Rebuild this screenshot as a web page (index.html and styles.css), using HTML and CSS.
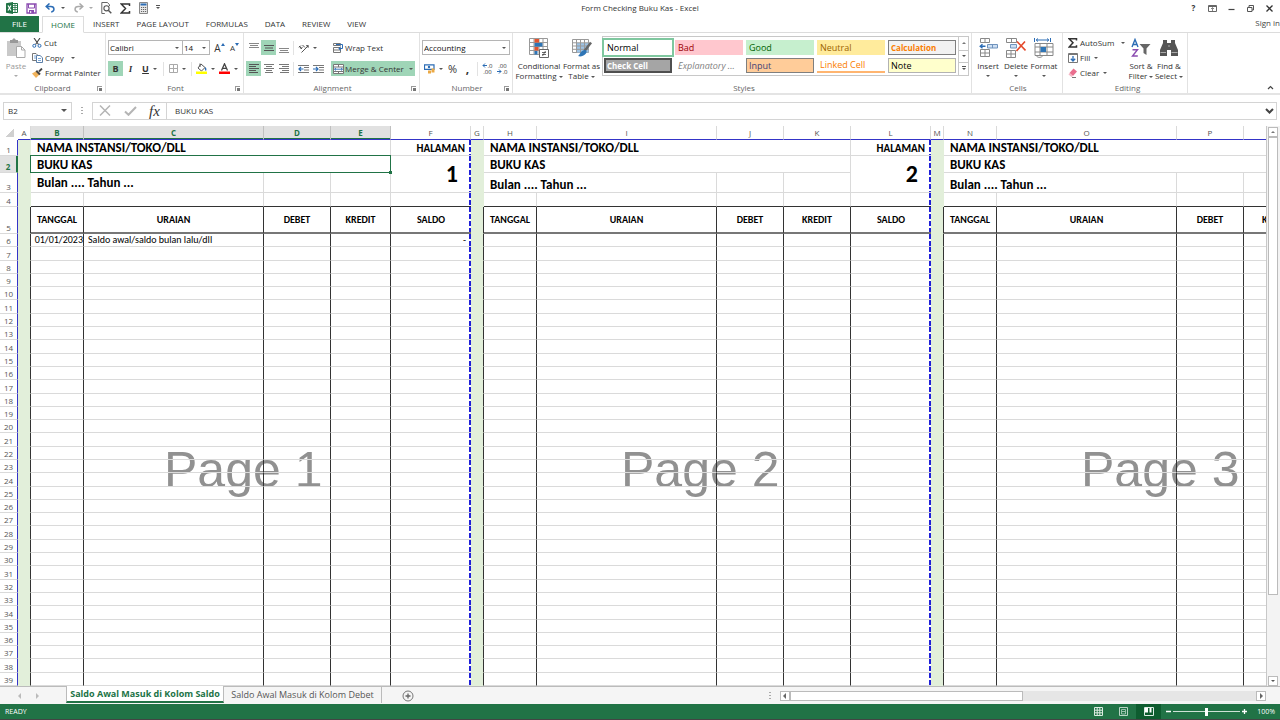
FILE: index.html
```html
<!DOCTYPE html>
<html lang="en">
<head>
<meta charset="utf-8">
<title>Form Checking Buku Kas - Excel</title>
<link rel="stylesheet" href="styles.css">
</head>
<body>
<header class="titlebar">
  <div class="quick">
    <svg class="app-logo" width="12" height="12" viewBox="0 0 12 12"><path d="M6 1.500h5.500v9H6z" fill="#fff" stroke="#217346"/><path d="M7 3.500h4M7 5.500h4M7 7.500h4M9 2v8" stroke="#217346" stroke-width=".8"/><path d="M0 1.200 7 0v12L0 10.800z" fill="#217346"/><path d="m2 3.500 3 5m0-5-3 5" stroke="#fff" stroke-width="1.200"/></svg>
    <button class="icon-btn" aria-label="Save"><svg width="11" height="11" viewBox="0 0 11 11"><path d="M1 1h9v9H1z" fill="#fff" stroke="#8a4bb0" stroke-width="1.300"/><path d="M2.500 1v4h6V1" fill="none" stroke="#8a4bb0"/><path d="M3 7h5v3.500H3z" fill="#8a4bb0"/><path d="M4.200 8h1v2h-1z" fill="#fff"/></svg></button>
    <button class="icon-btn" aria-label="Undo"><svg width="11" height="10" viewBox="0 0 11 10"><path d="M4.500.5 1.200 3.500l3.300 3M1.500 3.500h4.300c4 0 4.200 5 .4 5.500" fill="none" stroke="#2b6cb5" stroke-width="1.500"/></svg><i class="caret"></i></button>
    <button class="icon-btn faded" aria-label="Redo"><svg width="11" height="10" viewBox="0 0 11 10"><path d="M6.500.5l3.300 3-3.300 3M9.500 3.500H5.200c-4 0-4.200 5-.4 5.500" fill="none" stroke="#aaa" stroke-width="1.500"/></svg><i class="caret"></i></button>
    <button class="icon-btn" aria-label="Print Preview"><svg width="11" height="12" viewBox="0 0 11 12"><path d="M8.500 4V2.800L6.500.5H.8v11h3" fill="none" stroke="#666"/><circle cx="5.500" cy="6.300" r="2.600" fill="#fff" stroke="#555" stroke-width="1.100"/><path d="m7.300 8.200 3 3" stroke="#555" stroke-width="1.500"/></svg></button>
    <button class="icon-btn" aria-label="AutoSum"><svg width="11" height="11" viewBox="0 0 11 11"><path d="M9.500 3V1H1.200l4.300 4.500L1.200 10h8.300V8" fill="none" stroke="#333" stroke-width="1.500"/></svg></button>
    <button class="icon-btn" aria-label="Calculator"><svg width="9" height="12" viewBox="0 0 9 12"><path d="M.5.5h8v11h-8z" fill="#e8e8e8" stroke="#888"/><path d="M1.500 1.500h6v2h-6z" fill="#2b6cb5"/><path d="M2 5.500h5.500M2 7.500h5.500M2 9.500h5.500" stroke="#666" stroke-dasharray="1.200 .8"/></svg></button>
    <button class="icon-btn customize" aria-label="Customize"><i class="caret over"></i></button>
  </div>
  <h1>Form Checking Buku Kas - Excel</h1>
  <div class="window-btns">
    <button aria-label="Help"><b>?</b></button>
    <button aria-label="Ribbon options"><svg width="9" height="7" viewBox="0 0 9 7"><path d="M.5.5h8v6h-8zM.5 1.500h8" fill="none" stroke="#666"/><path d="m3 4 1.500-1.500L6 4M4.500 3v3" fill="none" stroke="#666" stroke-width=".8"/></svg></button>
    <button aria-label="Minimize"><svg width="7" height="7" viewBox="0 0 7 7"><path d="M.5 4.500h6" stroke="#444" stroke-width="1.200"/></svg></button>
    <button aria-label="Restore"><svg width="7" height="7" viewBox="0 0 7 7"><path d="M.5 2.500h4.500v4H.5zM2 2.500v-2h4.500V5H5" fill="none" stroke="#555"/></svg></button>
    <button aria-label="Close"><svg width="7" height="7" viewBox="0 0 7 7"><path d="m.5.5 6 6m0-6-6 6" stroke="#333" stroke-width="1.300"/></svg></button>
  </div>
</header>
<nav class="tabs">
  <button class="file">FILE</button>
  <button class="active">HOME</button>
  <button>INSERT</button>
  <button>PAGE LAYOUT</button>
  <button>FORMULAS</button>
  <button>DATA</button>
  <button>REVIEW</button>
  <button>VIEW</button>
  <a class="signin" href="#">Sign in</a>
</nav>

<section class="ribbon">
  <div class="group clipboard">
    <div class="body">
      <button class="big faded"><svg width="20" height="20" viewBox="0 0 20 20"><path d="M1 3h14v15H1z" fill="#c9c9c9"/><path d="M4 2h2l2-2 2 2h2v3H4z" fill="#999"/><path d="M10.500 8.500h5l3.500 3.500v7.500h-8.500z" fill="#fff" stroke="#aaa"/><path d="M15.500 8.500V12H19" fill="none" stroke="#aaa"/></svg><span>Paste</span><i class="caret"></i></button>
      <div class="stack">
        <button><svg width="10" height="10" viewBox="0 0 10 10"><path d="M2 0l4.500 6.500M8 0 3.500 6.500" stroke="#444" stroke-width="1.100"/><circle cx="2.300" cy="7.800" r="1.500" fill="none" stroke="#2b6cb5"/><circle cx="7.500" cy="7.800" r="1.500" fill="none" stroke="#2b6cb5"/></svg>Cut</button>
        <button><svg width="11" height="10" viewBox="0 0 11 10"><path d="M.5.5H4l2 2v5H.5z" fill="#fff" stroke="#777"/><path d="M4.500 2.500H8l2.500 2.200v4.800h-6z" fill="#fff" stroke="#5c7fa8"/><path d="M6 5.500h3M6 7.500h3M2 3h2M2 5h2" stroke="#5b93cf" stroke-width=".8"/></svg>Copy<i class="caret wide"></i></button>
        <button><svg width="11" height="10" viewBox="0 0 11 10"><path d="M0 5.500 4.500 3l3 3.500L4 10z" fill="#f0b35c"/><path d="M4.300 2.700 8 6.500" stroke="#444" stroke-width="2"/><path d="m7 3.500 3-3" stroke="#444" stroke-width="1.800"/></svg>Format Painter</button>
      </div>
    </div>
    <footer>Clipboard<i class="launch"></i></footer>
  </div>

  <div class="group font">
    <div class="body rows">
      <div class="row">
        <span class="combo family"><select aria-label="Font"><option>Calibri</option></select></span><span class="combo size"><select aria-label="Font size"><option>14</option></select></span>
        <button class="sq letter" aria-label="Increase font size">A<svg width="4" height="3" viewBox="0 0 4 3"><path d="M2 0l2 3H0z" fill="#2b6cb5"/></svg></button>
        <button class="sq letter small" aria-label="Decrease font size">A<svg width="4" height="3" viewBox="0 0 4 3"><path d="M0 0h4L2 3z" fill="#2b6cb5"/></svg></button>
      </div>
      <div class="row">
        <button class="sq on"><b>B</b></button>
        <button class="sq"><em>I</em></button>
        <button class="sq with-caret"><b><u>U</u></b><i class="caret"></i></button>
        <span class="sep"></span>
        <button class="sq with-caret" aria-label="Borders"><svg width="9" height="9" viewBox="0 0 9 9"><path d="M.5.5h8v8h-8zM4.500 0v9M0 4.500h9" fill="none" stroke="#aaa"/></svg><i class="caret"></i></button>
        <span class="sep"></span>
        <button class="sq with-caret" aria-label="Fill color"><svg width="11" height="11" viewBox="0 0 11 11"><path d="m5 1 4 3.500L5.500 8 2 5z" fill="#fff" stroke="#555"/><path d="M4 4V.5" stroke="#555"/><path d="M9 4c2 1 1.500 3 1 4-1-.5-1.500-2-1-4z" fill="#2b6cb5"/><path d="M0 8.500h11V11H0z" fill="#ff0"/></svg><i class="caret"></i></button>
        <button class="sq with-caret" aria-label="Font color"><svg width="11" height="11" viewBox="0 0 11 11"><path d="M2.500 7.500 5.500.8l3 6.700M3.600 5.300h3.800" fill="none" stroke="#444" stroke-width="1.300"/><path d="M0 8.500h11V11H0z" fill="red"/></svg><i class="caret"></i></button>
      </div>
    </div>
    <footer>Font<i class="launch"></i></footer>
  </div>

  <div class="group align">
    <div class="body rows">
      <div class="row">
        <button class="sq" aria-label="Top align"><svg width="10" height="10" viewBox="0 0 10 10"><path d="M0 .5h10M1 2.500h8M0 4.500h10" stroke="#888"/></svg></button>
        <button class="sq on" aria-label="Middle align"><svg width="10" height="10" viewBox="0 0 10 10"><path d="M0 2.500h10M1 5h8M0 7.500h10" stroke="#555"/></svg></button>
        <button class="sq" aria-label="Bottom align"><svg width="10" height="10" viewBox="0 0 10 10"><path d="M0 5.500h10M1 7.500h8M0 9.500h10" stroke="#888"/></svg></button>
        <span class="sep"></span>
        <button class="sq with-caret" aria-label="Orientation"><svg width="11" height="10" viewBox="0 0 11 10"><path d="M3.500 9.500 10 3M8 2.800l2.300-.3-.2 2.300M1 4.500l2-2M2.500 6l2.200-2.200M4.500 2l2.500 2.500M1 3l3 3" fill="none" stroke="#555"/></svg><i class="caret"></i></button>
      </div>
      <div class="row">
        <button class="sq on" aria-label="Align left"><svg width="10" height="9" viewBox="0 0 10 9"><path d="M0 .5h10M0 2.500h7M0 4.500h10M0 6.500h7M0 8.500h9" stroke="#555"/></svg></button>
        <button class="sq" aria-label="Center"><svg width="10" height="9" viewBox="0 0 10 9"><path d="M0 .5h10M2 2.500h6M0 4.500h10M2 6.500h6M1 8.500h8" stroke="#777"/></svg></button>
        <button class="sq" aria-label="Align right"><svg width="10" height="9" viewBox="0 0 10 9"><path d="M0 .5h10M3 2.500h7M0 4.500h10M3 6.500h7M1 8.500h9" stroke="#777"/></svg></button>
        <span class="sep"></span>
        <button class="sq" aria-label="Decrease indent"><svg width="11" height="8" viewBox="0 0 11 8"><path d="M0 .5h11M6 2.500h5M6 5h5M0 7.500h11" stroke="#777"/><path d="M5.500 4H1m2-2L1 4l2 2" fill="none" stroke="#2b6cb5" stroke-width="1.200"/></svg></button>
        <button class="sq" aria-label="Increase indent"><svg width="11" height="8" viewBox="0 0 11 8"><path d="M0 .5h11M6 2.500h5M6 5h5M0 7.500h11" stroke="#777"/><path d="M0 4h5M3 2l2 2-2 2" fill="none" stroke="#2b6cb5" stroke-width="1.200"/></svg></button>
      </div>
    </div>
    <div class="body rows wraps">
      <button class="wide-btn"><svg width="11" height="10" viewBox="0 0 11 10"><path d="M.5.500h7v2h-7zM.500 4.500h7v5h-7zM0 7h7" fill="none" stroke="#777"/><path d="M3 1.500h6.500v4H6m1.500-2L6 5.500l1.500 2" fill="none" stroke="#2b6cb5"/></svg>Wrap Text</button>
      <button class="wide-btn on"><svg width="11" height="10" viewBox="0 0 11 10"><path d="M.5.500h10v9H.5z" fill="#fff" stroke="#777"/><path d="M0 3h11M0 7.500h11M5.500 0v3M5.500 7.500V10" stroke="#777"/><path d="M1.500 5.200h8M3 4 1.500 5.200 3 6.500M8 4l1.500 1.200L8 6.500" fill="none" stroke="#2b6cb5" stroke-width=".9"/></svg>Merge &amp; Center<i class="caret end"></i></button>
    </div>
    <footer>Alignment<i class="launch"></i></footer>
  </div>

  <div class="group number">
    <div class="body rows">
      <span class="combo format"><select aria-label="Number format"><option>Accounting</option></select></span>
      <div class="row">
        <button class="sq with-caret" aria-label="Accounting format"><svg width="11" height="10" viewBox="0 0 11 10"><path d="M.5.8h9.500v4.500H.5z" fill="#fff" stroke="#2b6cb5" stroke-width="1.200"/><circle cx="5" cy="3" r="1.200" fill="#2b6cb5"/><path d="M4 6.500h3v3H4zM7.500 4.500h3v4h-3z" fill="#eba944"/></svg><i class="caret"></i></button>
        <button class="sq pct">%</button>
        <button class="sq comma">,</button>
        <span class="sep"></span>
        <button class="sq dec" aria-label="Increase decimal"><span><svg width="5" height="5" viewBox="0 0 5 5"><path d="M5 2.500H1m2-2-2 2 2 2" fill="none" stroke="#2b6cb5"/></svg>.0</span><span>.00</span></button>
        <button class="sq dec" aria-label="Decrease decimal"><span>.00</span><span><svg width="5" height="5" viewBox="0 0 5 5"><path d="M0 2.500h4m-2-2 2 2-2 2" fill="none" stroke="#2b6cb5"/></svg>.0</span></button>
      </div>
    </div>
    <footer>Number<i class="launch"></i></footer>
  </div>

  <div class="group styles">
    <div class="body">
      <button class="big"><svg width="20" height="20" viewBox="0 0 20 20"><path d="M.5.500h18v16H.5zM5 0v17M10 0v17M14 0v17M0 4.500h18M0 8.500h18M0 12.500h18" fill="#fff" stroke="#999"/><path d="M5.500 1h4.500v3.500H5.500zM5.500 9h4v3.500h-4z" fill="#e2532f"/><path d="M5.500 5h8v3.500h-8zM5.500 13h3v3.500h-3z" fill="#2e75b6"/><path d="M10.500 11.500h9v8h-9z" fill="#fff" stroke="#666"/><path d="M13 14.500h4M13 16.500h4M16.500 13l-3 5" stroke="#444" stroke-width=".8"/></svg><span>Conditional</span><span>Formatting<i class="caret tight"></i></span></button>
      <button class="big"><svg width="20" height="20" viewBox="0 0 20 20"><path d="M.5 1.500h16v13H.5z" fill="#fff" stroke="#999"/><path d="M4.500 5h12v9.500h-12z" fill="#9dc3e6"/><path d="M4.500 1v14M8.500 1v14M12.500 1v14M0 4.800h17M0 8h17M0 11.300h17" stroke="#999"/><path d="M19 4.500 12.500 13" stroke="#666" stroke-width="2.500"/><path d="M12.500 12c2 0 3 2 1 4s-5 3-7.500 2c2-1 2-5 6.500-6z" fill="#2e75b6"/></svg><span>Format as</span><span>Table<i class="caret tight"></i></span></button>
      <div class="gallery">
        <div class="swatches">
          <button class="s-normal">Normal</button><button class="s-bad">Bad</button><button class="s-good">Good</button><button class="s-neutral">Neutral</button><button class="s-calc">Calculation</button>
          <button class="s-check">Check Cell</button><button class="s-expl">Explanatory ...</button><button class="s-input">Input</button><button class="s-linked">Linked Cell</button><button class="s-note">Note</button>
        </div>
        <div class="gallery-nav">
          <button aria-label="Previous styles" disabled><i class="caret up"></i></button><button aria-label="Next styles"><i class="caret"></i></button><button aria-label="More styles"><i class="caret over"></i></button>
        </div>
      </div>
    </div>
    <footer>Styles</footer>
  </div>

  <div class="group cells">
    <div class="body">
      <button class="big"><svg width="20" height="20" viewBox="0 0 20 20"><path d="M2.500.500h9v4h-9zM7 .500v4M2.500 11.500h9v7h-9zM7 11.500v7M2.500 15h9" fill="#fff" stroke="#888"/><path d="M9.500 6.500h10v3.500h-10zM14.500 6.500V10" fill="#cfe0f3" stroke="#6f93bd"/><path d="M7.500 8.200H2m2.500-2L2.200 8.200l2.300 2" fill="none" stroke="#2b6cb5" stroke-width="1.400"/></svg><span>Insert</span><i class="caret"></i></button>
      <button class="big"><svg width="20" height="20" viewBox="0 0 20 20"><path d="M.5.500h10v4H.5zM5.500.500v4M.500 12.500h9v7h-9zM5 12.500v7M.500 16h9" fill="#fff" stroke="#888"/><path d="M4.500 6.500h6v3.500h-6z" fill="#cfe0f3" stroke="#6f93bd"/><path d="m11 3.500 8.500 9m-.5-9-8.500 9.500" stroke="#e4492b" stroke-width="1.600"/></svg><span>Delete</span><i class="caret"></i></button>
      <button class="big"><svg width="20" height="20" viewBox="0 0 20 20"><path d="M.5 0v4M16.500 0v4M2 2h13M4 .500 2.200 2 4 3.500M13 .500 14.800 2 13 3.500" fill="none" stroke="#2b6cb5"/><path d="M1 5.500h18v12H1zM6 5.500v12M13 5.500v12M1 9h18M1 14h18M2 17.500c2 3 6 2 7 0" fill="#fff" stroke="#888"/><path d="M6.500 9H12v5H6.500z" fill="#2e75b6"/></svg><span>Format</span><i class="caret"></i></button>
    </div>
    <footer>Cells</footer>
  </div>

  <div class="group editing">
    <div class="body">
      <div class="stack">
        <button><svg width="10" height="10" viewBox="0 0 10 10"><path d="M8.500 2.500V.8H1.200L5 4.800 1.200 9h7.300V7.300" fill="none" stroke="#333" stroke-width="1.500"/></svg>AutoSum<i class="caret wide"></i></button>
        <button><svg width="10" height="10" viewBox="0 0 10 10"><path d="M.5.500h9v9h-9z" fill="#fff" stroke="#777"/><path d="M.5 1.500h9" stroke="#777"/><path d="M5 3v5M2.800 5.800 5 8l2.200-2.200" fill="none" stroke="#2b6cb5" stroke-width="1.300"/></svg>Fill<i class="caret tight"></i></button>
        <button><svg width="10" height="10" viewBox="0 0 10 10"><path d="m5.500.5 3.500 3L5 8 1.500 5z" fill="#ea6e8e"/><path d="M1.500 5 5 8 3.500 9 .5 6.500z" fill="#f5b6c5"/><path d="M4 9.500h4" stroke="#777"/></svg>Clear<i class="caret tight"></i></button>
      </div>
      <button class="big"><svg width="20" height="20" viewBox="0 0 20 20"><path d="m1 9 3-7.500L7 9M2.200 6.500h3.600" fill="none" stroke="#2b6cb5" stroke-width="1.400"/><path d="M1.500 11.700h5L1.500 18h5.300" fill="none" stroke="#8a4bb0" stroke-width="1.400"/><path d="M8.500 6h11l-4 4.500V17l-3-2v-4.500z" fill="#666"/></svg><span>Sort &amp;</span><span>Filter<i class="caret tight"></i></span></button>
      <button class="big"><svg width="20" height="20" viewBox="0 0 20 20"><path d="M4 2h4v3h4V2h4v3l3 7v6h-7v-6H8v6H1v-6l3-7z" fill="#555"/><path d="M1.500 14.500H7M12.500 14.500h6M9 8h2" stroke="#aaa"/></svg><span>Find &amp;</span><span>Select<i class="caret tight"></i></span></button>
    </div>
    <footer>Editing</footer>
  </div>
  <button class="collapse" aria-label="Collapse the ribbon"><svg width="7" height="5" viewBox="0 0 7 5"><path d="m1 4 2.500-2.500L6 4" fill="none" stroke="#444" stroke-width="1.200"/></svg></button>
</section>

<section class="formula-bar">
  <div class="box name-box"><input aria-label="Name box" value="B2"><i class="caret big-caret"></i></div>
  <span class="grip"></span>
  <div class="box fx">
    <button aria-label="Cancel"><svg width="12" height="11" viewBox="0 0 12 11"><path d="m1 .5 10 10m0-10-10 10" stroke="#b5b5b5" stroke-width="1.500"/></svg></button>
    <button aria-label="Enter"><svg width="13" height="10" viewBox="0 0 13 10"><path d="m1 5.500 3.500 3.300L12 1" fill="none" stroke="#b5b5b5" stroke-width="2"/></svg></button>
    <button class="fx-btn" aria-label="Insert function">fx</button>
  </div>
  <div class="box formula"><input aria-label="Formula bar" value="BUKU KAS"><svg width="9" height="6" viewBox="0 0 9 6"><path d="m1 1 3.500 3.500L8 1" fill="none" stroke="#444" stroke-width="2"/></svg></div>
</section>

<main class="workspace">
  <div class="viewport">
    <div class="watermark p1">Page 1</div>
    <div class="watermark p2">Page 2</div>
    <div class="watermark p3">Page 3</div>
    <table class="grid">
      <thead>
        <tr><th class="corner"></th><th>A</th><th class="sel">B</th><th class="sel">C</th><th class="sel">D</th><th class="sel">E</th><th>F</th><th>G</th><th>H</th><th>I</th><th>J</th><th>K</th><th>L</th><th>M</th><th>N</th><th>O</th><th>P</th><th></th></tr>
      </thead>
      <tbody id="rows">
        <tr><th>1</th><td class="gut"></td><td class="span4 title">NAMA INSTANSI/TOKO/DLL</td><td class="brk head">HALAMAN</td><td class="gut"></td><td class="span4 title">NAMA INSTANSI/TOKO/DLL</td><td class="brk head">HALAMAN</td><td class="gut"></td><td class="span4 title">NAMA INSTANSI/TOKO/DLL</td></tr>
        <tr><th class="sel">2</th><td class="gut"></td><td class="span4 title active-cell">BUKU KAS</td><td class="brk page-no">1</td><td class="gut"></td><td class="span4 title">BUKU KAS</td><td class="brk page-no">2</td><td class="gut"></td><td class="span4 title">BUKU KAS</td></tr>
        <tr><th>3</th><td class="gut"></td><td class="span2 title">Bulan .... Tahun ...</td><td></td><td></td><td class="gut"></td><td class="span2 title low">Bulan .... Tahun ...</td><td></td><td></td><td class="gut"></td><td class="span2 title low">Bulan .... Tahun ...</td><td></td><td></td></tr>
        <tr class="above"><th>4</th><td class="gut"></td><td></td><td></td><td></td><td></td><td class="brk"></td><td class="gut"></td><td></td><td></td><td></td><td></td><td class="brk"></td><td class="gut"></td><td></td><td></td><td></td><td></td></tr>
        <tr class="ink heads"><th>5</th><td class="gut"></td><td>TANGGAL</td><td>URAIAN</td><td>DEBET</td><td>KREDIT</td><td class="brk">SALDO</td><td class="gut"></td><td>TANGGAL</td><td>URAIAN</td><td>DEBET</td><td>KREDIT</td><td class="brk">SALDO</td><td class="gut"></td><td>TANGGAL</td><td>URAIAN</td><td>DEBET</td><td>KREDIT</td></tr>
        <tr class="ink"><th>6</th><td class="gut"></td><td class="date">01/01/2023</td><td class="note">Saldo awal/saldo bulan lalu/dll</td><td></td><td></td><td class="brk amount">-</td><td class="gut"></td><td></td><td></td><td></td><td></td><td class="brk"></td><td class="gut"></td><td></td><td></td><td></td><td></td></tr>
      </tbody>
    </table>
  </div>
  <div class="vscroll">
    <button aria-label="Scroll up"><i class="caret up"></i></button>
    <div class="track"><div class="thumb"></div></div>
    <button aria-label="Scroll down"><i class="caret"></i></button>
  </div>
</main>

<section class="sheet-bar">
  <div class="sheet-nav"><button aria-label="Previous sheet"><i class="caret left"></i></button><button aria-label="Next sheet"><i class="caret right"></i></button></div>
  <button class="sheet current">Saldo Awal Masuk di Kolom Saldo</button>
  <button class="sheet">Saldo Awal Masuk di Kolom Debet</button>
  <button class="add" aria-label="New sheet"><svg width="12" height="12" viewBox="0 0 12 12"><circle cx="6" cy="6" r="5" fill="none" stroke="#777"/><path d="M3.500 6h5M6 3.500v5" stroke="#666" stroke-width="1.300"/></svg></button>
  <span class="grip"></span>
  <div class="hscroll">
    <button aria-label="Scroll left"><i class="caret left"></i></button>
    <div class="track"><div class="thumb"></div></div>
    <button aria-label="Scroll right"><i class="caret right"></i></button>
  </div>
</section>

<footer class="status">
  <span>READY</span>
  <div class="views">
    <button aria-label="Normal view"><svg width="9" height="9" viewBox="0 0 9 9"><path d="M.5.500h8v8h-8zM3.200 0v9M5.800 0v9M0 3.200h9M0 5.800h9" fill="none" stroke="#dcebe2"/></svg></button>
    <button aria-label="Page layout view"><svg width="9" height="9" viewBox="0 0 9 9"><path d="M.5.500h8v8h-8z" fill="none" stroke="#b9d4c4"/><path d="M2.500 2.500h4v4.500h-4zM3 4.500h3" fill="none" stroke="#b9d4c4" stroke-width=".8"/></svg></button>
    <button class="pressed" aria-label="Page break preview"><svg width="10" height="9" viewBox="0 0 10 9"><path d="M.5.500h9v8h-9z" fill="none" stroke="#dcebe2"/><path d="M1 1h3v4.500H1zM5.500 1h2v4.500h-2z" fill="#fff"/></svg></button>
  </div>
  <div class="zoom">
    <button aria-label="Zoom out"><svg width="5" height="7" viewBox="0 0 5 7"><path d="M0 3.500h5" stroke="#fff" stroke-width="1.500"/></svg></button>
    <input type="range" min="0" max="100" value="50" aria-label="Zoom">
    <button aria-label="Zoom in"><svg width="5" height="7" viewBox="0 0 5 7"><path d="M0 3.500h5M2.500 1v5" stroke="#fff" stroke-width="1.300"/></svg></button>
  </div>
  <span class="pct-label">100%</span>
</footer>
<script src="rows.js"></script>
</body>
</html>
```

FILE: rows.js
```js
// Blank ledger rows 7 to 39: gutter columns A, G, M and page-break columns F, L.
const kinds = ['gut', '', '', '', '', 'brk', 'gut', '', '', '', '', 'brk', 'gut', '', '', '', ''];
const body = document.getElementById('rows');
for (let n = 7; n <= 39; n++) {
  const tr = document.createElement('tr');
  tr.className = 'ink';
  const th = document.createElement('th');
  th.textContent = n;
  tr.append(th);
  for (const kind of kinds) {
    const td = document.createElement('td');
    if (kind) td.className = kind;
    tr.append(td);
  }
  body.append(tr);
}
```

FILE: styles.css
```css
* { box-sizing: border-box; }
html, body { height: 100%; }
body {
  margin: 0;
  display: flex;
  flex-direction: column;
  overflow: hidden;
  background: #fff;
  color: #333;
  font: 8px/10px "Segoe UI", "Open Sans", sans-serif;
}
button, input, select {
  font: inherit;
  color: inherit;
  margin: 0;
  padding: 0;
  border: 0;
  background: none;
}
button { display: flex; align-items: center; justify-content: center; white-space: nowrap; }
svg { display: block; flex: none; }

.caret { width: 0; height: 0; flex: none; border: 2px solid transparent; border-top-color: #555; border-bottom-width: 0; }
.caret.up { border-width: 0 2px 2px; border-color: transparent transparent #777; }
.caret.left { border-width: 3px 3px 3px 0; border-color: transparent #666; }
.caret.right { border-width: 3px 0 3px 3px; border-color: transparent #666; }
.caret.tight { display: inline-block; margin-left: 2px; vertical-align: middle; }
.caret.wide { margin-left: 5px; }
.caret.end { margin-left: auto; }
.caret.over::before { content: ""; display: block; width: 4px; height: 1px; margin: -4px 0 0 -2px; background: #555; }
.faded { color: #999; }
.faded .caret { border-top-color: #aaa; }

/* Title bar */
.titlebar { display: grid; grid-template-columns: 1fr auto 1fr; height: 16px; align-items: center; }
.titlebar h1 { margin: 0; font-size: 8px; font-weight: 400; color: #333; }
.quick { display: flex; align-items: center; gap: 8px; padding-left: 6px; }
.icon-btn { gap: 5px; }
.window-btns { display: flex; justify-content: flex-end; padding-right: 1px; }
.window-btns button { width: 19px; height: 14px; }

/* Ribbon tabs */
.tabs { display: flex; gap: 1px; height: 17px; border-bottom: 1px solid #dcdcdc; flex: none; }
.tabs button { padding: 0 8px; }
.tabs .file { width: 39px; margin-right: 2px; background: #217346; color: #fff; }
.tabs .active { width: 42px; margin-bottom: -1px; border: 1px solid #dcdcdc; border-bottom-color: #fff; background: #fff; color: #217346; }
.signin { margin-left: auto; color: #444; text-decoration: none; line-height: 13px; }

/* Ribbon */
.ribbon { display: flex; flex: none; height: 62px; border-bottom: 2px solid #e4e4e4; position: relative; }
.group {
  display: grid;
  grid-template: 1fr 12px / auto;
  grid-auto-flow: column;
  padding-top: 3px;
  border-right: 1px solid #e2e2e2;
}
.group footer { grid-row: 2; grid-column: 1 / -1; display: flex; align-items: flex-end; justify-content: center; position: relative; color: #666; }
.launch { position: absolute; right: 3px; top: 5px; width: 5px; height: 5px; border: 1px solid #999; border-width: 1px 0 0 1px; background: linear-gradient(#777, #777) right bottom / 3px 3px no-repeat; }
.body { display: flex; align-items: flex-start; min-height: 0; }
.body.rows { flex-direction: column; gap: 6px; padding-top: 4px; }
.row { display: flex; height: 15px; align-items: center; }
.stack { display: flex; flex-direction: column; gap: 5px; padding-top: 2px; }
.stack button { height: 10px; gap: 2px; justify-content: flex-start; }
.big { flex-direction: column; justify-content: flex-start; padding-top: 2px; }
.big svg { margin-bottom: 3px; }
.big > span { line-height: 10px; }
.big > .caret { margin-top: 4px; }
.on { background: #9fd5b7; }
.sq { width: 15px; height: 15px; font-size: 9px; }
.with-caret { width: 23px; gap: 4px; }
.sep { width: 1px; height: 14px; margin: 0 2px; background: #e2e2e2; }

.clipboard { width: 106px; }
.clipboard .big { width: 32px; }
.font { width: 138px; padding-left: 2px; }
.combo { position: relative; display: block; height: 15px; border: 1px solid #b5b5b5; color: #111; }
.combo::after { content: ""; position: absolute; right: 3px; top: 6px; border: 2px solid transparent; border-top-color: #555; border-bottom-width: 0; }
.combo select { appearance: none; width: 100%; height: 100%; padding-left: 1px; }
.combo.family { width: 75px; }
.combo.size { width: 28px; margin: 0 2px 0 -1px; }
.combo.format { width: 88px; }
.letter { font-size: 10px; align-items: center; }
.letter svg { margin-bottom: 6px; }
.letter.small { font-size: 8px; }
em, .fx-btn { font-family: "Liberation Serif", serif; font-style: italic; font-weight: 700; }
.align { width: 176px; grid-template-columns: 85px 1fr; padding-left: 2px; }
.wide-btn { width: 84px; height: 15px; padding: 0 2px; gap: 1px; justify-content: flex-start; }
.number { width: 93px; padding-left: 2px; }
.pct { font-size: 11px; }
.comma { font-weight: 700; font-size: 12px; }
.dec { flex-direction: column; font-size: 6px; line-height: 6px; }
.dec span { display: flex; align-items: center; }

.styles { width: 459px; padding-left: 4px; }
.styles .big { width: 44px; }
.styles .big + .big { width: 41px; }
.gallery { display: flex; height: 40px; border: 1px solid #c8c8c8; }
.swatches { display: grid; grid-template-columns: repeat(5, 68px); gap: 3px; padding: 3px 2px 2px 1px; color: #000; }
.swatches button { justify-content: flex-start; height: 15px; padding: 0 3px; font-size: 9px; }
.swatches .s-normal { outline: 2px solid #7fc79f; }
.s-bad { background: #ffc7ce; color: #9c0006; }
.s-good { background: #c6efce; color: #006100; }
.s-neutral { background: #ffeb9c; color: #9c6500; }
.swatches .s-calc { background: #f2f2f2; border: 1px solid #7f7f7f; padding: 0 2px; color: #fa7d00; font-weight: 700; font-size: 8px; }
.swatches .s-check { background: #a5a5a5; border: 2px solid #4f4f4f; padding: 0 1px; color: #fff; font-weight: 700; font-size: 8px; }
.swatches .s-expl { color: #7f7f7f; font-style: italic; }
.swatches .s-input { background: #ffcc99; border: 1px solid #7f7f7f; padding: 0 2px; color: #3f3f76; }
.s-linked { border-bottom: 2px solid #ffb570; color: #fa7d00; }
.swatches .s-note { background: #ffffcc; border: 1px solid #b2b2b2; padding: 0 2px; }
.gallery-nav { display: grid; grid-template-rows: repeat(3, 1fr); width: 10px; border-left: 1px solid #c8c8c8; }
.gallery-nav button + button { border-top: 1px solid #c8c8c8; }
.cells { width: 91px; padding-left: 2px; }
.cells .big { width: 28px; }
.editing { width: 125px; padding-left: 5px; }
.editing .big { width: 28px; }
.editing .stack { width: 59px; }
.collapse { position: absolute; right: 5px; bottom: 1px; width: 9px; height: 9px; }

/* Formula bar */
.formula-bar { display: flex; align-items: center; flex: none; height: 31px; padding: 0 3px; }
.box { display: flex; align-items: center; height: 18px; border: 1px solid #d4d4d4; }
.box input { flex: 1; min-width: 0; padding-left: 4px; }
.name-box { width: 69px; padding-right: 4px; }
.big-caret { border-width: 3px 3px 0; }
.grip { width: 2px; height: 8px; margin: 0 9px; background: repeating-linear-gradient(#aaa 0 1px, transparent 1px 3px); }
.fx { width: 75px; justify-content: space-around; }
.fx-btn { font-size: 15px; font-weight: 400; }
.formula { flex: 1; margin-left: -1px; padding-right: 2px; }
.formula input { padding-left: 8px; }

/* Worksheet */
.workspace { display: flex; flex: 1; min-height: 0; }
.viewport { position: relative; flex: 1; min-width: 0; overflow: hidden; border-right: 1px solid #c8c8c8; }
.grid {
  position: relative;
  display: grid;
  height: 100%;
  grid-template-columns: 18px 13px 53px 180px 67px 60px 80px 13px 53px 180px 67px 67px 80px 13px 53px 180px 67px 67px;
  grid-template-rows: 14px 16px 17px 20px 14px 27px repeat(34, minmax(0, 1fr));
  font-family: Calibri, Carlito, Lato, sans-serif;
  font-size: 10px;
  color: #000;
}
.grid thead, .grid tbody, .grid tr { display: contents; }
.grid th, .grid td { display: flex; align-items: center; min-width: 0; padding: 0; line-height: 12px; white-space: nowrap; border: 0 solid #dadada; border-width: 0 1px 1px 0; }
.grid th { justify-content: center; color: #555; font-family: "Segoe UI", "Open Sans", sans-serif; font-weight: 400; font-size: 8px; }
.grid thead th { border-bottom-color: #3434c8; }
.grid thead .corner { border-color: #fff; background: linear-gradient(135deg, transparent 50%, #d0d0d0 50%) 6px 3px / 8px 8px no-repeat; }
.grid tbody th { align-items: flex-end; line-height: 11px; border-right: 1px solid #3434c8; }
.grid .sel { background: #e1e1e1; color: #217346; font-weight: 700; }
.grid thead .sel { box-shadow: inset 0 -1px #217346; border-right-color: #c0c0c0; }
.grid tbody .sel { border-right: 2px solid #217346; }
.grid .gut { background: #e2efda; border-color: #e2efda; }
.grid .span4 { grid-column: span 4; }
.grid .span2 { grid-column: span 2; }
.grid .title { padding-left: 6px; font-weight: 700; font-size: 13px; line-height: 15px; }
.grid .low { align-items: flex-end; }
.grid .brk { border-right: 0; background: repeating-linear-gradient(#1f1fd8 0 5px, #fff 5px 7px) right / 2px 100% no-repeat; }
.grid .head { justify-content: flex-end; align-items: flex-end; padding-right: 6px; font-weight: 700; font-size: 11px; }
.grid .page-no { grid-row: span 2; justify-content: flex-end; padding: 0 13px 0 0; font-weight: 700; font-size: 24px; }
.grid .active-cell { position: relative; }
.active-cell::before { content: ""; position: absolute; inset: -1px -1px -1px -1px; border: 1px solid #217346; }
.active-cell::after { content: ""; position: absolute; right: -2px; bottom: -2px; width: 3px; height: 3px; background: #217346; }
.grid .above td:not(.gut) { border-bottom-color: #333; }
.grid .ink td { border-right-color: #333; }
.grid .heads td { justify-content: center; font-weight: 700; }
.grid .heads td:not(.gut) { border-bottom: 2px solid #777; }
.grid .date { justify-content: flex-end; }
.grid .note { padding-left: 4px; }
.grid .amount { justify-content: flex-end; padding-right: 5px; }
.watermark { position: absolute; bottom: 187px; color: #919191; font: 50px/58px "Liberation Sans", Arial, sans-serif; }
.p1 { left: 164px; }
.p2 { left: 621px; }
.p3 { left: 1081px; }

.vscroll { display: flex; flex-direction: column; width: 13px; padding: 1px 2px 0 1px; background: #f3f3f3; }
.vscroll button, .hscroll button { flex: none; width: 10px; height: 10px; border: 1px solid #bbb; background: #fff; }
.vscroll .track { flex: 1; }
.vscroll .thumb { width: 10px; height: 85%; border: 1px solid #bbb; background: #fff; }

/* Sheet tabs */
.sheet-bar { display: flex; flex: none; height: 18px; border-top: 1px solid #bbb; background: #f5f5f5; align-items: center; }
.sheet-nav { display: flex; width: 66px; gap: 15px; padding-left: 18px; opacity: .4; }
.sheet { align-self: flex-start; height: 16px; width: 158px; border-right: 1px solid #bbb; font-size: 9px; color: #555; }
.sheet.current { margin-top: -1px; height: 17px; border-left: 1px solid #bbb; border-bottom: 2px solid #217346; background: #fff; color: #217346; font-weight: 700; }
.add { margin-left: 20px; }
.sheet-bar .grip { margin: 0 9px 0 auto; }
.hscroll { display: flex; width: 38%; margin-right: 14px; background: #e6e6e6; }
.hscroll .track { flex: 1; }
.hscroll .thumb { width: 50%; height: 10px; border: 1px solid #bbb; background: #fff; }

/* Status bar */
.status { display: flex; flex: none; align-items: center; height: 16px; padding: 0 5px; background: #217346; border-bottom: 1px solid #444; color: #fff; font-size: 7px; }
.views { display: flex; margin-left: auto; align-self: stretch; }
.views button { width: 25px; }
.pressed { background: #0e5c2f; }
.zoom { display: flex; align-items: center; gap: 2px; margin: 0 10px 0 5px; }
.zoom input { appearance: none; width: 67px; height: 9px; background: linear-gradient(#cfe2d7, #cfe2d7) center / 100% 1px no-repeat; }
.zoom input::-webkit-slider-thumb { appearance: none; width: 3px; height: 8px; background: #fff; }
```
